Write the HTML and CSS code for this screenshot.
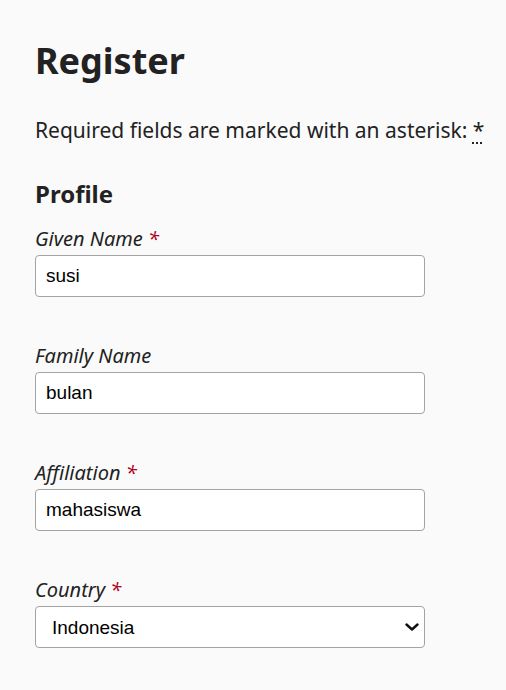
FILE: index.html
```html
<!DOCTYPE html>
<html lang="en">
<head>
<meta charset="utf-8">
<title>Register</title>
<link rel="stylesheet" href="styles.css">
</head>
<body>
<main class="page">
  <h1 class="title">Register</h1>
  <p class="required-note">Required fields are marked with an asterisk: <abbr class="req-abbr" title="required">*</abbr></p>
  <form class="form">
    <section class="section">
      <h2 class="section-title">Profile</h2>
      <div class="field">
        <label class="label" for="given">Given Name <span class="req">*</span></label>
        <input class="input" id="given" type="text" value="susi">
      </div>
      <div class="field">
        <label class="label" for="family">Family Name</label>
        <input class="input" id="family" type="text" value="bulan">
      </div>
      <div class="field">
        <label class="label" for="aff">Affiliation <span class="req">*</span></label>
        <input class="input" id="aff" type="text" value="mahasiswa">
      </div>
      <div class="field">
        <label class="label" for="country">Country <span class="req">*</span></label>
        <div class="select-wrap">
          <select class="input select" id="country">
            <option selected>Indonesia</option>
          </select>
          <svg class="chevron" width="14" height="8" viewBox="0 0 14 8" aria-hidden="true">
            <path d="M1.5 1.5 L7 6.5 L12.5 1.5" fill="none" stroke="#111" stroke-width="2.4" stroke-linecap="round" stroke-linejoin="round"/>
          </svg>
        </div>
      </div>
    </section>
  </form>
</main>
</body>
</html>
```

FILE: styles.css
```css
html, body {
  margin: 0;
  padding: 0;
  background: #fafafa;
}
body {
  font-family: "Noto Sans", sans-serif;
  color: #222222;
}
.page {
  padding: 39px 0 0 35px;
}
.title {
  margin: 0;
  font-size: 36px;
  line-height: 44px;
  font-weight: 700;
}
.required-note {
  margin: 32px 0 0;
  font-size: 21px;
  line-height: 30px;
}
.req-abbr {
  text-decoration: underline dotted;
  text-decoration-thickness: 2px;
  text-underline-offset: 4px;
  cursor: help;
}
.form {
  margin: 0;
}
.section {
  margin: 0;
  padding: 0;
}
.section-title {
  margin: 33px 0 14px;
  font-size: 24px;
  line-height: 32px;
  font-weight: 700;
}
.field {
  display: flex;
  flex-direction: column;
  gap: 2px;
  margin: 0 0 44px;
}
.label {
  padding-top: 1px;
  font-style: italic;
  font-size: 20px;
  line-height: 28px;
}
.req {
  color: #b3001b;
}
.input {
  box-sizing: border-box;
  width: 390px;
  height: 42px;
  margin: 0;
  padding: 0 10px;
  border: 1px solid #a3a3a3;
  border-radius: 4px;
  background: #ffffff;
  font-family: "Liberation Sans", Arial, sans-serif;
  font-size: 19px;
  color: #000000;
}
.select-wrap {
  position: relative;
  width: 390px;
}
.select {
  display: block;
  appearance: none;
  -webkit-appearance: none;
  padding-left: 16px;
  padding-right: 36px;
}
.chevron {
  position: absolute;
  left: 370px;
  top: 17px;
  pointer-events: none;
}
```
